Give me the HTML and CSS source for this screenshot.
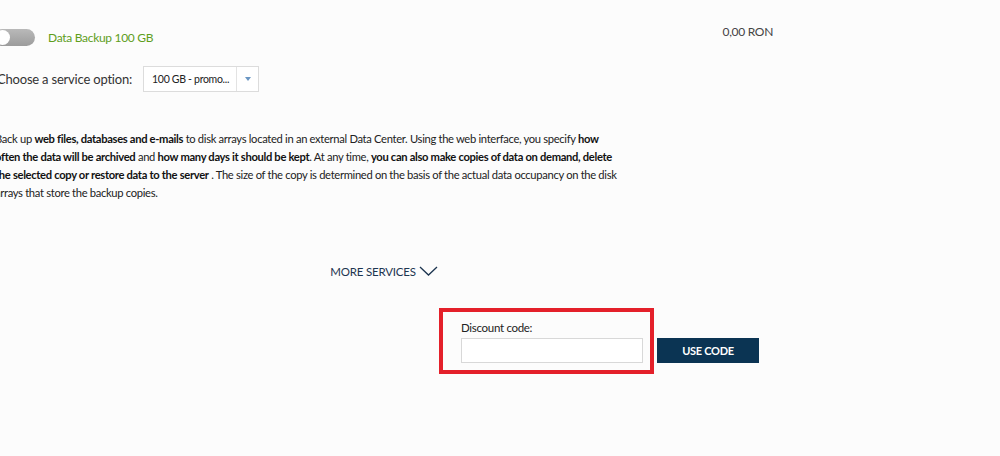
FILE: index.html
```html
<!DOCTYPE html>
<html>
<head>
<meta charset="utf-8">
<link rel="stylesheet" href="styles.css">
</head>
<body>
<div class="wrap">
  <div class="service-row">
    <span class="toggle"><span class="knob"></span></span>
    <span class="service-name">Data Backup 100 GB</span>
    <span class="price">0,00 RON</span>
  </div>
  <div class="option-row">
    <span class="option-label">Choose a service option:</span>
    <div class="select">
      <span class="select-value">100 GB - promo...</span>
      <span class="select-btn"><span class="caret"></span></span>
    </div>
  </div>
  <p class="desc">Back up <b>web files, databases and e-mails</b> to disk arrays located in an external Data Center. Using the web interface, you specify <b>how</b><br><b>often the data will be archived</b> and <b>how many days it should be kept</b>. At any time, <b>you can also make copies of data on demand, delete</b><br><b>the selected copy or restore data to the server</b> . The size of the copy is determined on the basis of the actual data occupancy on the disk<br>arrays that store the backup copies.</p>
  <div class="more">
    <span>MORE SERVICES</span>
    <svg class="chev" width="19" height="10" viewBox="0 0 19 10"><polyline points="1,1 9.5,9 18,1" fill="none" stroke="#1d3550" stroke-width="1.3"/></svg>
  </div>
  <div class="discount-row">
    <div class="discount-box">
      <label class="discount-label">Discount code:</label>
      <span class="discount-input"></span>
    </div>
    <button class="use-code">USE CODE</button>
  </div>
</div>
</body>
</html>
```
FILE: styles.css
```css
html, body {
  margin: 0;
  background: #fcfcfc;
}
body {
  font-family: Lato, "Noto Sans", sans-serif;
  color: #333;
}
.wrap {
  width: 780px;
  margin-left: -6px;
  padding-top: 27px;
}
.service-row {
  display: flex;
  align-items: center;
  height: 20px;
}
.toggle {
  position: relative;
  width: 41px;
  height: 17px;
  border-radius: 9px;
  background: linear-gradient(#b9b9b9, #9c9c9c);
  flex: none;
}
.knob {
  position: absolute;
  left: 1px;
  top: 1px;
  width: 15px;
  height: 15px;
  border-radius: 50%;
  background: #fff;
}
.service-name {
  margin-left: 13px;
  font-size: 12px;
  letter-spacing: -0.3px;
  color: #5f9e1c;
}
.price {
  margin-left: auto;
  margin-right: 1px;
  font-size: 12px;
  letter-spacing: -0.3px;
  color: #444;
  align-self: flex-start;
  margin-top: -3px;
}
.option-row {
  display: flex;
  align-items: center;
  margin-top: 19px;
  height: 26px;
}
.option-label {
  font-size: 13px;
  letter-spacing: -0.2px;
  color: #333;
  margin-left: 3px;
}
.select {
  display: flex;
  margin-left: 11px;
  width: 114px;
  height: 24px;
  border: 1px solid #dcdcdc;
  background: #fff;
}
.select-value {
  flex: 1;
  font-size: 10.5px;
  letter-spacing: -0.3px;
  color: #222;
  line-height: 24px;
  padding-left: 8px;
  white-space: nowrap;
}
.select-btn {
  width: 21px;
  border-left: 1px solid #e3e3e3;
  display: flex;
  align-items: center;
  justify-content: center;
}
.caret {
  width: 0;
  height: 0;
  border-left: 3px solid transparent;
  border-right: 3px solid transparent;
  border-top: 4px solid #6a96c3;
}
.desc {
  margin: 38px 0 0 1px;
  font-size: 11.2px;
  line-height: 18px;
  letter-spacing: -0.32px;
  white-space: nowrap;
  color: #222;
}
.desc b {
  font-weight: 700;
  color: #111;
}
.more {
  display: flex;
  justify-content: center;
  align-items: center;
  gap: 3px;
  margin-top: 63px;
  font-size: 11.5px;
  letter-spacing: -0.2px;
  color: #1d3550;
}
.chev {
  margin-top: -2px;
}
.discount-row {
  display: flex;
  justify-content: flex-end;
  align-items: flex-end;
  margin-top: 30px;
  margin-right: 15px;
}
.discount-box {
  display: flex;
  flex-direction: column;
  border: 4px solid #e4202a;
  padding: 8px 7px 7px 18px;
  width: 182px;
}
.discount-label {
  font-size: 11.5px;
  letter-spacing: -0.3px;
  color: #222;
  line-height: 16px;
  margin-bottom: 2px;
}
.discount-input {
  display: block;
  height: 23px;
  border: 1px solid #d8d8d8;
  background: #fff;
}
.use-code {
  margin: 0 0 11px 3px;
  width: 102px;
  height: 25px;
  border: none;
  background: #0b3453;
  color: #fff;
  font-family: Lato, "Noto Sans", sans-serif;
  font-weight: 700;
  font-size: 11px;
  letter-spacing: -0.3px;
  padding: 0;
}
```
